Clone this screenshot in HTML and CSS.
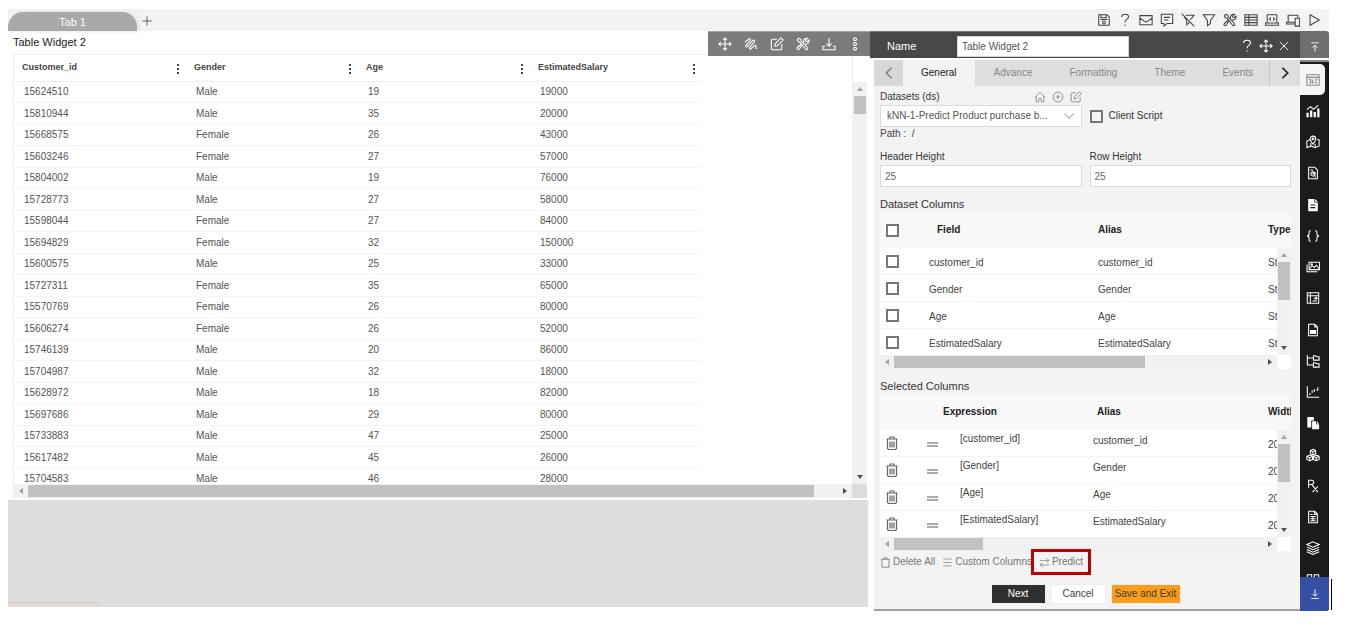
FILE: index.html
```html
<!DOCTYPE html>
<html lang="en">
<head>
<meta charset="utf-8">
<title>Table Widget 2</title>
<link rel="stylesheet" href="styles.css">
</head>
<body>
<svg class="sprite" aria-hidden="true">
  <symbol id="i-move" viewBox="0 0 16 16"><path d="M8 1v14M1 8h14M5.800 3.200 8 1l2.200 2.200M5.800 12.800 8 15l2.200-2.200M3.200 5.800 1 8l2.200 2.200M12.800 5.800 15 8l-2.200 2.200"/></symbol>
  <symbol id="i-scribble" viewBox="0 0 16 16"><path d="M1 6 5.500 2.200c1.500-1 2.500.3 1.500 1.600L2.200 9.500c-1 1.500.3 2.500 1.600 1.500L10 4c1.500-1.200 2.800 0 1.800 1.500l-5.300 6.300c-1 1.500.3 2.700 1.700 1.600l3.300-3.400c1.400-1.200 2.800-.2 2 1.300-.6 1.200.2 2 1.700 1.200"/></symbol>
  <symbol id="i-edit" viewBox="0 0 16 16"><path d="M8 2.500H3A1.500 1.500 0 0 0 1.500 4v9A1.500 1.500 0 0 0 3 14.500h9a1.500 1.500 0 0 0 1.500-1.500V8M6 7.500 12.500 1l2.500 2.500L8.500 10 5.500 10.500z"/></symbol>
  <symbol id="i-tools" viewBox="0 0 16 16"><path d="M1.500 3 3 1.500l2.500 1 .3 2L13 12a1.400 1.400 0 0 1 0 2 1.400 1.400 0 0 1-2 0L4.500 6l-2-.5zM9 6.500a3.500 3.500 0 0 1 4-5L11 3.500l.3 1.500 1.500.3 2-2a3.500 3.500 0 0 1-4.500 4.400M6.800 9.300 3.500 14a1.400 1.400 0 0 1-2-2L6 8"/></symbol>
  <symbol id="i-save-down" viewBox="0 0 16 16"><path d="M8 1v9.500M5 7.500l3 3 3-3M3.500 10.500H1v4h14v-4h-2.500"/></symbol>
  <symbol id="i-rings" viewBox="0 0 16 16"><circle cx="8" cy="2.500" r="1.700"/><circle cx="8" cy="8" r="1.700"/><circle cx="8" cy="13.500" r="1.700"/></symbol>
  <symbol id="i-kebab" viewBox="0 0 4 10"><path class="solid" d="M1 0h2v2H1zM1 4h2v2H1zM1 8h2v2H1z"/></symbol>
  <symbol id="i-plus" viewBox="0 0 16 16"><path d="M8 2v12M2 8h12"/></symbol>
  <symbol id="i-floppy" viewBox="0 0 16 16"><path d="M2 2h9.500L14 4.500V14H2zM4.500 2v3.500h6V2M4 7.500h8"/><circle cx="8" cy="10.800" r="1.600"/></symbol>
  <symbol id="i-help" viewBox="0 0 16 16"><path d="M4 4.500C4.200 2.500 5.800 1.500 8 1.500s4 1.200 4 3.200C12 7 8 7.300 8 10.500M8 13v1.700"/></symbol>
  <symbol id="i-mail" viewBox="0 0 16 16"><path d="M1 3h14v10.500H1zM1 6l7 4.500L15 6"/></symbol>
  <symbol id="i-comment" viewBox="0 0 16 16"><path d="M1.500 1.500h13V12H8l-3.500 3v-3h-3zM4.500 5h7M4.500 8h5"/></symbol>
  <symbol id="i-nofilter" viewBox="0 0 16 16"><path d="M5.500 2.500H15L10.500 8M3.500 4.500 6.500 8v5.500L9.500 11V9.500M.8.800l14.400 14.400"/></symbol>
  <symbol id="i-filter" viewBox="0 0 16 16"><path d="M1.500 2h13L9.700 8.500V12l-3.400 2.500v-6z"/></symbol>
  <symbol id="i-grid" viewBox="0 0 16 16"><path d="M1 2h14v12H1zM5.500 2v12M1 5h14M1 8h14M1 11h14"/></symbol>
  <symbol id="i-laptop" viewBox="0 0 16 16"><path d="M2.500 2h11v9.500h-11zM.5 11.500h15v2.500H.5zM6.800 5 5 6.800l1.800 1.800M9.200 5 11 6.800 9.200 8.600"/></symbol>
  <symbol id="i-devices" viewBox="0 0 16 16"><path d="M10 12.500H.5v-2H10M2.500 10.500v-8h11V5M10.500 6h5v9h-5z"/></symbol>
  <symbol id="i-play" viewBox="0 0 16 16"><path d="M3.500 2 14 8 3.500 14z"/></symbol>
  <symbol id="i-close" viewBox="0 0 16 16"><path d="M2.500 2.500l11 11M13.500 2.500l-11 11"/></symbol>
  <symbol id="i-top" viewBox="0 0 16 16"><path d="M3 2.500h10M8 14V5.500M4.500 9 8 5.500 11.500 9"/></symbol>
  <symbol id="i-left" viewBox="0 0 16 16"><path d="M11 2 5 8l6 6"/></symbol>
  <symbol id="i-right" viewBox="0 0 16 16"><path d="M5 2l6 6-6 6"/></symbol>
  <symbol id="i-down" viewBox="0 0 16 16"><path d="M2 5l6 6 6-6"/></symbol>
  <symbol id="i-home" viewBox="0 0 16 16"><path d="M1 8.500 8 2l7 6.500M3 7v7.500h3.500V10h3v4.500H13V7"/></symbol>
  <symbol id="i-add" viewBox="0 0 16 16"><circle cx="8" cy="8" r="6.500"/><path d="M8 5v6M5 8h6"/></symbol>
  <symbol id="i-trash" viewBox="0 0 12 14"><path d="M.5 3h11M1.500 3v9.500l1 1h7l1-1V3M4 3V1h4v2M4 5.500v6M6 5.500v6M8 5.500v6"/></symbol>
  <symbol id="i-bin" viewBox="0 0 12 14"><path d="M.5 3h11M1.500 3v10h9V3M4 3V1h4v2"/></symbol>
  <symbol id="i-menu" viewBox="0 0 16 16"><path d="M2 3h12M2 8h12M2 13h12"/></symbol>
  <symbol id="i-swap" viewBox="0 0 16 16"><path d="M1 5h13.500M11 1.500 14.500 5 11 8M15 11.500H1.500M5 8.500l-3.500 3L5 15"/></symbol>
  <symbol id="i-widget" viewBox="0 0 16 16"><path d="M1 2h14v12H1zM1 5h14M3.500 7.500h2v4h-2M7.500 7.500v4h2M12.500 7.500h-1.200v4h1.200"/></symbol>
  <symbol id="i-chart" viewBox="0 0 16 16"><path d="M1 6.500 5 3l3.500 3L14 1.500"/><path class="solid" d="M.5 10h2.600v5H.5zM4.600 7.500h2.600V15H4.600zM8.700 9h2.600v6H8.700zM12.800 5h2.600v10h-2.600z"/></symbol>
  <symbol id="i-map" viewBox="0 0 16 16"><path d="M4.500 5.500 1 7v7.500l4.500-2 5 2 4.500-2V5.500l-2-.5M5.500 9v3.500M10.500 10v4.500M8 10.500C6 8 4.800 6.500 4.800 4.500a3.200 3.200 0 0 1 6.400 0c0 2-1.200 3.500-3.200 6z"/><circle cx="8" cy="4.500" r="1"/></symbol>
  <symbol id="i-filegear" viewBox="0 0 16 16"><path d="M3 1.500h7L13 4.500v10H3z"/><circle cx="8" cy="9" r="2.500"/><path d="M8 6.500V9h2.500M5 4.500h3M10 12l1 1"/></symbol>
  <symbol id="i-doc" viewBox="0 0 16 16"><path class="solid" d="M2.500 1h7v4h4v10h-11zM10.300 1l3.200 3.300h-3.200z"/><path class="cut" d="M5 8h5.500M5 11h5.500"/></symbol>
  <symbol id="i-braces" viewBox="0 0 16 16"><path d="M5.500 2C3 2 3.500 3 3.500 5.500S2.500 8 1 8c1.500 0 2.500 0 2.500 2.500S3 14 5.500 14M10.500 2c2.500 0 2 1 2 3.500S13.500 8 15 8c-1.500 0-2.500 0-2.500 2.500S13 14 10.500 14"/></symbol>
  <symbol id="i-images" viewBox="0 0 16 16"><path d="M3.500 2.500h12V11h-12zM1.200 5v8.500H13M4 10l3-3.500 2.500 2L12 6l3 4"/><circle cx="6.500" cy="5" r=".8"/></symbol>
  <symbol id="i-pivot" viewBox="0 0 16 16"><path d="M1.500 2h13v12h-13zM1.500 5.500h13M5 2v12M7.500 11.500h4v-4M9 9l2.500-2L13 9"/></symbol>
  <symbol id="i-filedata" viewBox="0 0 16 16"><path d="M3 1.500h7L13 4.500v10H3zM10 1.500v3h3"/><path class="solid" d="M4.500 8h7v4.500h-7z"/></symbol>
  <symbol id="i-tree" viewBox="0 0 16 16"><path d="M1.500 1v11.500H8M1.500 4.500H8M8.500 2h2.500l1 1.200h3V7H8.500zM8.500 10H11l1 1.200h3V15H8.500z"/></symbol>
  <symbol id="i-plot" viewBox="0 0 16 16"><path d="M1.500 1.500v12.500H15M4.500 11.500V9M7 9V6M9.500 8V4.500M12 6h1.500V2.500"/></symbol>
  <symbol id="i-copy" viewBox="0 0 16 16"><path class="solid" d="M1.500 1H9v4H6v8H1.500zM7 6h4.500v3.500H15V15H7zM12.300 6 15 8.800h-2.700z"/></symbol>
  <symbol id="i-cubes" viewBox="0 0 16 16"><path d="M8 1.500 11 3v3.500L8 8 5 6.500V3zM5 3l3 1.500L11 3M8 4.500V8M4.300 8 7.500 9.500V13l-3.200 1.500L1 13V9.500zM1 9.500 4.300 11l3.200-1.500M4.300 11v3.500M11.700 8 15 9.500V13l-3.300 1.500L8.500 13V9.500zM8.500 9.500l3.200 1.500L15 9.500M11.700 11v3.500"/></symbol>
  <symbol id="i-rx" viewBox="0 0 16 16"><path d="M3 10V1.500h3.500a2.300 2.300 0 0 1 0 4.700H3M6.500 6.200 13.500 15M13.500 8.500 7.500 15"/></symbol>
  <symbol id="i-report" viewBox="0 0 16 16"><path d="M3 1.500h7L13 4.500v10H3zM9.500 1.500V5H13M5 5h2.500M5 7.500h6M5 10h6M5 12.300h6M8 7.500v5"/></symbol>
  <symbol id="i-layers" viewBox="0 0 16 16"><path d="M8 1l7 3-7 3-7-3zM1 7l7 3 7-3M1 9.800l7 3 7-3M1 12.400l7 3 7-3"/></symbol>
  <symbol id="i-blocks" viewBox="0 0 16 16"><path d="M1.500 6V2h5v4M9.500 6V2h5v4"/></symbol>
  <symbol id="i-download" viewBox="0 0 16 16"><path d="M8 1.500v9M4.500 7.500 8 11l3.500-3.500M3 14h10"/></symbol>
</svg>

<div class="app">
  <header class="topbar">
    <nav class="page-tabs">
      <button class="page-tab">Tab 1</button>
      <button class="add-tab" aria-label="Add tab"><svg><use href="#i-plus"/></svg></button>
    </nav>
    <div class="top-tools">
      <button aria-label="Save"><svg><use href="#i-floppy"/></svg></button>
      <button aria-label="Help"><svg><use href="#i-help"/></svg></button>
      <button aria-label="Mail"><svg><use href="#i-mail"/></svg></button>
      <button aria-label="Comment"><svg><use href="#i-comment"/></svg></button>
      <button aria-label="Clear filter"><svg><use href="#i-nofilter"/></svg></button>
      <button aria-label="Filter"><svg><use href="#i-filter"/></svg></button>
      <button aria-label="Tools"><svg><use href="#i-tools"/></svg></button>
      <button aria-label="Grid"><svg><use href="#i-grid"/></svg></button>
      <button aria-label="Code"><svg><use href="#i-laptop"/></svg></button>
      <button aria-label="Devices"><svg><use href="#i-devices"/></svg></button>
      <button aria-label="Run"><svg><use href="#i-play"/></svg></button>
    </div>
  </header>

  <main class="main">
    <section class="workspace">
      <div class="widget-head">
        <h1 class="widget-title">Table Widget 2</h1>
        <div class="widget-tools">
          <button aria-label="Move"><svg><use href="#i-move"/></svg></button>
          <button aria-label="Style"><svg><use href="#i-scribble"/></svg></button>
          <button aria-label="Edit"><svg><use href="#i-edit"/></svg></button>
          <button aria-label="Settings"><svg><use href="#i-tools"/></svg></button>
          <button aria-label="Export"><svg><use href="#i-save-down"/></svg></button>
          <button aria-label="More"><svg><use href="#i-rings"/></svg></button>
        </div>
      </div>
      <div class="data-box">
        <div class="data-view">
          <table class="data-table">
            <thead><tr>
              <th><span class="th-in">Customer_id<button aria-label="Customer_id menu"><svg><use href="#i-kebab"/></svg></button></span></th>
              <th><span class="th-in">Gender<button aria-label="Gender menu"><svg><use href="#i-kebab"/></svg></button></span></th>
              <th><span class="th-in">Age<button aria-label="Age menu"><svg><use href="#i-kebab"/></svg></button></span></th>
              <th><span class="th-in">EstimatedSalary<button aria-label="EstimatedSalary menu"><svg><use href="#i-kebab"/></svg></button></span></th>
            </tr></thead>
            <tbody>
              <tr><td>15624510</td><td>Male</td><td>19</td><td>19000</td></tr>
              <tr><td>15810944</td><td>Male</td><td>35</td><td>20000</td></tr>
              <tr><td>15668575</td><td>Female</td><td>26</td><td>43000</td></tr>
              <tr><td>15603246</td><td>Female</td><td>27</td><td>57000</td></tr>
              <tr><td>15804002</td><td>Male</td><td>19</td><td>76000</td></tr>
              <tr><td>15728773</td><td>Male</td><td>27</td><td>58000</td></tr>
              <tr><td>15598044</td><td>Female</td><td>27</td><td>84000</td></tr>
              <tr><td>15694829</td><td>Female</td><td>32</td><td>150000</td></tr>
              <tr><td>15600575</td><td>Male</td><td>25</td><td>33000</td></tr>
              <tr><td>15727311</td><td>Female</td><td>35</td><td>65000</td></tr>
              <tr><td>15570769</td><td>Female</td><td>26</td><td>80000</td></tr>
              <tr><td>15606274</td><td>Female</td><td>26</td><td>52000</td></tr>
              <tr><td>15746139</td><td>Male</td><td>20</td><td>86000</td></tr>
              <tr><td>15704987</td><td>Male</td><td>32</td><td>18000</td></tr>
              <tr><td>15628972</td><td>Male</td><td>18</td><td>82000</td></tr>
              <tr><td>15697686</td><td>Male</td><td>29</td><td>80000</td></tr>
              <tr><td>15733883</td><td>Male</td><td>47</td><td>25000</td></tr>
              <tr><td>15617482</td><td>Male</td><td>45</td><td>26000</td></tr>
              <tr><td>15704583</td><td>Male</td><td>46</td><td>28000</td></tr>
            </tbody>
          </table>
        </div>
        <div class="vbar-col"><div class="vbar"><i class="arrow up off"></i><span class="thumb short"></span><i class="arrow down"></i></div></div>
        <div class="hbar"><i class="arrow left off"></i><span class="track"><span class="thumb wide"></span></span><i class="arrow right"></i></div>
        <div class="corner"></div>
      </div>
      <div class="canvas"><span class="status-chip"></span></div>
    </section>

    <aside class="inspector">
      <div class="insp-head">
        <label for="w-name">Name</label>
        <input id="w-name" type="text" value="Table Widget 2">
        <div class="head-tools">
          <button aria-label="Help"><svg><use href="#i-help"/></svg></button>
          <button aria-label="Move"><svg><use href="#i-move"/></svg></button>
          <button aria-label="Close"><svg><use href="#i-close"/></svg></button>
        </div>
      </div>
      <button class="rail-top" aria-label="Collapse"><svg><use href="#i-top"/></svg></button>

      <div class="panel">
        <div class="tabs">
          <button class="tab-arrow prev" aria-label="Previous tabs"><svg><use href="#i-left"/></svg></button>
          <div class="tab-list">
            <button class="tab active">General</button>
            <button class="tab">Advance</button>
            <button class="tab">Formatting</button>
            <button class="tab">Theme</button>
            <button class="tab">Events</button>
          </div>
          <button class="tab-arrow next" aria-label="Next tabs"><svg><use href="#i-right"/></svg></button>
        </div>
        <form class="form">
          <div class="pair">
            <div>
              <div class="label-row">
                <label for="ds">Datasets (ds)</label>
                <span class="ds-tools">
                  <button type="button" aria-label="Home"><svg><use href="#i-home"/></svg></button>
                  <button type="button" aria-label="Add"><svg><use href="#i-add"/></svg></button>
                  <button type="button" aria-label="Edit"><svg><use href="#i-edit"/></svg></button>
                </span>
              </div>
              <div class="select-wrap">
                <select id="ds"><option>kNN-1-Predict Product purchase b...</option></select>
                <svg><use href="#i-down"/></svg>
              </div>
            </div>
            <label class="check-label"><input class="check" type="checkbox">Client Script</label>
          </div>
          <p class="path">Path :&nbsp; /</p>
          <div class="pair sizes">
            <div><label class="field-label" for="hh">Header Height</label><input class="text" id="hh" type="text" value="25"></div>
            <div><label class="field-label" for="rh">Row Height</label><input class="text" id="rh" type="text" value="25"></div>
          </div>

          <h2 class="section-title">Dataset Columns</h2>
          <div class="list">
            <div class="list-view">
              <table class="cols dataset">
                <colgroup><col class="c-check"><col class="c-field"><col class="c-alias"><col class="c-last"></colgroup>
                <thead><tr><th><input class="check" type="checkbox" aria-label="Select all"></th><th class="inset">Field</th><th>Alias</th><th>Type</th></tr></thead>
                <tbody>
                  <tr><td><input class="check" type="checkbox" aria-label="customer_id"></td><td>customer_id</td><td>customer_id</td><td>String</td></tr>
                  <tr><td><input class="check" type="checkbox" aria-label="Gender"></td><td>Gender</td><td>Gender</td><td>String</td></tr>
                  <tr><td><input class="check" type="checkbox" aria-label="Age"></td><td>Age</td><td>Age</td><td>String</td></tr>
                  <tr><td><input class="check" type="checkbox" aria-label="EstimatedSalary"></td><td>EstimatedSalary</td><td>EstimatedSalary</td><td>String</td></tr>
                </tbody>
              </table>
              <div class="vbar over"><i class="arrow up off"></i><span class="thumb mid"></span><i class="arrow down"></i></div>
            </div>
            <div class="hbar"><i class="arrow left off"></i><span class="track"><span class="thumb seventy"></span></span><i class="arrow right"></i></div>
          </div>

          <h2 class="section-title">Selected Columns</h2>
          <div class="list">
            <div class="list-view">
              <table class="cols selected">
                <colgroup><col class="c-act"><col class="c-act"><col class="c-expr"><col class="c-sel"><col class="c-last"></colgroup>
                <thead><tr><th></th><th colspan="2" class="expr-head">Expression</th><th class="alias-head">Alias</th><th>Width</th></tr></thead>
                <tbody>
                  <tr><td><button type="button" class="icon-btn" aria-label="Delete"><svg><use href="#i-trash"/></svg></button></td><td><span class="grip"></span></td><td class="lift">[customer_id]</td><td class="lift alias">customer_id</td><td>200</td></tr>
                  <tr><td><button type="button" class="icon-btn" aria-label="Delete"><svg><use href="#i-trash"/></svg></button></td><td><span class="grip"></span></td><td class="lift">[Gender]</td><td class="lift alias">Gender</td><td>200</td></tr>
                  <tr><td><button type="button" class="icon-btn" aria-label="Delete"><svg><use href="#i-trash"/></svg></button></td><td><span class="grip"></span></td><td class="lift">[Age]</td><td class="lift alias">Age</td><td>200</td></tr>
                  <tr><td><button type="button" class="icon-btn" aria-label="Delete"><svg><use href="#i-trash"/></svg></button></td><td><span class="grip"></span></td><td class="lift">[EstimatedSalary]</td><td class="lift alias">EstimatedSalary</td><td>200</td></tr>
                </tbody>
              </table>
              <div class="vbar over"><i class="arrow up off"></i><span class="thumb mid"></span><i class="arrow down"></i></div>
            </div>
            <div class="hbar"><i class="arrow left off"></i><span class="track"><span class="thumb quarter"></span></span><i class="arrow right"></i></div>
          </div>

          <div class="actions">
            <button type="button"><svg><use href="#i-bin"/></svg>Delete All</button>
            <button type="button"><svg><use href="#i-menu"/></svg>Custom Columns</button>
            <button type="button" class="marked"><svg><use href="#i-swap"/></svg>Predict</button>
          </div>
          <div class="footer">
            <button type="button" class="btn dark">Next</button>
            <button type="button" class="btn plain">Cancel</button>
            <button type="button" class="btn amber">Save and Exit</button>
          </div>
        </form>
      </div>

      <nav class="rail">
        <div class="rail-list">
          <button class="current" aria-label="Widget"><svg><use href="#i-widget"/></svg></button>
          <button aria-label="Charts"><svg><use href="#i-chart"/></svg></button>
          <button aria-label="Map"><svg><use href="#i-map"/></svg></button>
          <button aria-label="File settings"><svg><use href="#i-filegear"/></svg></button>
          <button aria-label="Document"><svg><use href="#i-doc"/></svg></button>
          <button aria-label="Code"><svg><use href="#i-braces"/></svg></button>
          <button aria-label="Images"><svg><use href="#i-images"/></svg></button>
          <button aria-label="Pivot"><svg><use href="#i-pivot"/></svg></button>
          <button aria-label="Data file"><svg><use href="#i-filedata"/></svg></button>
          <button aria-label="Tree"><svg><use href="#i-tree"/></svg></button>
          <button aria-label="Plot"><svg><use href="#i-plot"/></svg></button>
          <button aria-label="Copy"><svg><use href="#i-copy"/></svg></button>
          <button aria-label="Cubes"><svg><use href="#i-cubes"/></svg></button>
          <button aria-label="Rx"><svg><use href="#i-rx"/></svg></button>
          <button aria-label="Report"><svg><use href="#i-report"/></svg></button>
          <button aria-label="Layers"><svg><use href="#i-layers"/></svg></button>
          <button aria-label="Blocks"><svg><use href="#i-blocks"/></svg></button>
        </div>
        <button class="rail-bottom" aria-label="Scroll down"><svg><use href="#i-download"/></svg></button>
        <span class="caret"></span>
      </nav>
    </aside>
  </main>
</div>
</body>
</html>
```
FILE: styles.css
```css
* { box-sizing: border-box; }

body {
  margin: 0;
  background: #fff;
  color: #444;
  font: 10px/14px "Liberation Sans", Arial, sans-serif;
}

.sprite { position: absolute; width: 0; height: 0; }

svg {
  display: block;
  width: 14px;
  height: 14px;
  fill: none;
  stroke: currentColor;
  stroke-width: 1.2;
}

.solid { fill: currentColor; stroke: none; }
.cut { stroke: #1b1b1b; }

button {
  display: block;
  margin: 0;
  padding: 0;
  border: 0;
  background: none;
  color: inherit;
  font: inherit;
}

input, select { margin: 0; font: inherit; }
h1, h2, p { margin: 0; font-weight: normal; }

.app { padding: 9px 21px 0 8px; }

/* Top bar */
.topbar {
  display: flex;
  justify-content: space-between;
  height: 22px;
  background: #f3f3f3;
}

.page-tabs { display: flex; align-items: flex-end; gap: 4px; }

.page-tab {
  width: 129px;
  height: 19px;
  border-radius: 15px 15px 0 0;
  background: #a9a9a9;
  box-shadow: 2px 0 4px #ddd;
  color: #fff;
  font-size: 11px;
}

.add-tab { padding: 4px 0; color: #555; }
.add-tab svg { width: 12px; height: 12px; }

.top-tools {
  display: flex;
  align-items: center;
  gap: 7px;
  padding-right: 8px;
  color: #444;
}

.main { display: flex; }

/* Workspace */
.workspace {
  display: flex;
  flex: 1;
  flex-direction: column;
  min-width: 0;
  padding-bottom: 4px;
}

.widget-head {
  display: flex;
  justify-content: space-between;
  height: 23px;
}

.widget-title {
  padding-left: 5px;
  color: #222;
  font-size: 11px;
  line-height: 23px;
}

.widget-tools {
  position: relative;
  display: flex;
  align-items: center;
  gap: 12px;
  height: 25px;
  padding: 0 8px 0 10px;
  background: #7b7b7b;
  border-top: 1px solid #a5a5a5;
  color: #fff;
}

.data-box {
  display: grid;
  grid-template-columns: minmax(0, 1fr) 15px;
  grid-template-rows: auto 14px;
  margin: 0 3px 0 5px;
  border-top: 1px solid #eee;
  border-left: 1px solid #eee;
}

.data-view { height: 429px; overflow: hidden; }

.data-table {
  width: 688px;
  border-collapse: separate;
  border-spacing: 0;
  table-layout: fixed;
}

.data-table th {
  height: 27px;
  padding: 0 6px 2px 8px;
  border-bottom: 1px solid #f0f0f0;
  color: #444;
  font-size: 9px;
  text-align: left;
}

.th-in { display: flex; align-items: center; justify-content: space-between; }
.th-in svg { width: 4px; height: 10px; margin-top: 3px; }

.data-table td {
  height: 21px;
  padding: 0 0 0 10px;
  border-bottom: 1px solid #f5f5f5;
  color: #555;
}

.data-table tr:nth-child(even) td { height: 22px; }

.vbar-col {
  display: flex;
  padding-top: 27px;
  border-left: 1px solid #eee;
}

.corner { background: #dcdcdc; }

.canvas {
  position: relative;
  flex: 1;
  margin: 2px 2px 0 0;
  overflow: hidden;
  background: #ddd;
}

.status-chip {
  position: absolute;
  bottom: 0;
  left: 0;
  width: 90px;
  height: 5px;
  border-top: 1px solid #d0cac8;
  border-radius: 0 3px 0 0;
  background: #e3dad5;
}

/* Scroll bars */
.vbar {
  display: flex;
  flex: 1;
  flex-direction: column;
  align-items: center;
  width: 14px;
  background: #f1f1f1;
}

.vbar.over { position: absolute; top: 36px; right: 0; bottom: 0; }

.hbar {
  display: flex;
  align-items: center;
  height: 14px;
  background: #f1f1f1;
}

.track { flex: 1; height: 12px; }
.thumb { display: block; background: #c1c1c1; }
.short { width: 12px; height: 18px; }
.mid { width: 12px; height: 38px; }
.vbar .down { margin-top: auto; }
.wide { width: 97%; height: 12px; }
.seventy { width: 71%; height: 12px; }
.quarter { width: 25%; height: 12px; }

.arrow {
  width: 14px;
  height: 14px;
  background: #505050;
  clip-path: polygon(4px 5px, 10px 5px, 7px 9px);
}

.arrow.up { clip-path: polygon(4px 9px, 10px 9px, 7px 5px); }
.arrow.left { clip-path: polygon(9px 4px, 9px 10px, 5px 7px); }
.arrow.right { clip-path: polygon(5px 4px, 5px 10px, 9px 7px); }
.arrow.off { background: #a3a3a3; }

/* Inspector */
.inspector {
  display: grid;
  grid-template-columns: minmax(0, 1fr) 29px;
  grid-template-rows: 27px auto;
  row-gap: 2px;
  flex: 0 0 459px;
  min-width: 0;
}

.insp-head {
  display: flex;
  align-items: center;
  padding: 2px 10px 0 17px;
  border-top: 1px solid #777;
  background: #484848;
  color: #fff;
}

.insp-head label { width: 70px; font-size: 11px; }

.insp-head input {
  width: 172px;
  height: 21px;
  padding: 0 4px;
  border: 1px solid #cfd4de;
  background: #fff;
  color: #555;
}

.head-tools { display: flex; align-items: center; gap: 5px; margin-left: auto; }
.head-tools button:last-child svg { width: 12px; height: 12px; }

.rail-top {
  display: grid;
  place-items: center;
  padding-top: 4px;
  border-radius: 0 3px 0 0;
  background: #6e6e6e;
  color: #fff;
}

.rail-top svg { width: 12px; height: 12px; }

.panel {
  margin-left: 4px;
  border-bottom: 2px solid #a0a0a0;
  background: #f3f3f3;
}

.tabs { display: flex; height: 26px; background: #dedede; color: #888; }
.tab-list { display: flex; flex: 1; gap: 1px; overflow: hidden; }
.tab { padding: 0 18px; }
.tab.active { background: #f3f3f3; color: #222; }
.tab-arrow { display: grid; place-items: center; flex: 0 0 29px; }
.tab-arrow svg { stroke-width: 2; }
.prev { background: #d8d8d8; }
.next { flex-basis: 31px; border-left: 1px solid #c4c4c4; color: #222; }

.form { padding: 3px 9px 5px 6px; }

.pair {
  display: grid;
  grid-template-columns: 1fr 1fr;
  column-gap: 8px;
}

.label-row, .field-label {
  display: flex;
  align-items: center;
  justify-content: space-between;
  height: 16px;
  color: #333;
}

.ds-tools { display: flex; gap: 6px; color: #888; }
.ds-tools svg { width: 12px; height: 12px; }

.select-wrap { position: relative; }

select, .text {
  display: block;
  width: 100%;
  height: 22px;
  padding: 0 6px;
  border: 1px solid #d5dae5;
  border-radius: 0;
  background: #fff;
  color: #555;
  appearance: none;
}

.text { padding: 0 4px; color: #666; }

.select-wrap svg {
  position: absolute;
  top: 5px;
  right: 7px;
  width: 12px;
  height: 12px;
  color: #777;
}

.check-label {
  display: flex;
  align-items: center;
  gap: 6px;
  height: 22px;
  align-self: end;
  color: #333;
}

.check {
  display: block;
  width: 13px;
  height: 13px;
  border: 2px solid #777;
  background: #fff;
  appearance: none;
}

.check-label .check { background: transparent; }

.path { color: #444; }
.sizes { margin-top: 8px; }

.section-title {
  margin-top: 10px;
  color: #333;
  font-size: 11px;
  line-height: 15px;
}

.list { background: #fff; }

.list-view {
  position: relative;
  height: 143px;
  overflow: hidden;
}

.cols {
  width: 440px;
  border-collapse: separate;
  border-spacing: 0;
  table-layout: fixed;
}

.cols th {
  height: 36px;
  padding: 0;
  background: #f8f8f8;
  color: #222;
  text-align: left;
}

.cols td {
  height: 27px;
  padding: 3px 0 0;
  border-bottom: 1px solid #f3f3f3;
}

.cols .check { margin-left: 6px; }
.dataset td:first-child { padding-top: 0; }
.cols .inset { padding-left: 8px; }
.cols .expr-head { padding-left: 23px; }
.cols .alias-head { padding-left: 4px; }
.cols .lift { padding: 2px 0 0; vertical-align: top; }
.cols .alias { padding-top: 4px; }
.selected td:first-child { padding-top: 0; }

.c-check { width: 49px; }
.c-field { width: 169px; }
.c-alias { width: 170px; }
.c-act { width: 40px; }
.c-expr { width: 133px; }
.c-sel { width: 175px; }
.c-last { width: auto; }

.icon-btn { margin-left: 6px; color: #666; }
.icon-btn svg { width: 12px; height: 14px; }

.grip {
  display: block;
  width: 11px;
  height: 5px;
  margin-left: 7px;
  border-top: 2px solid #aaa;
  border-bottom: 2px solid #aaa;
}

.list .hbar { margin-right: 14px; }
.list .seventy { width: 68%; }
.list .quarter { width: 24%; }

.actions {
  display: flex;
  align-items: center;
  gap: 7px;
  height: 22px;
  color: #777;
}

.actions button { display: flex; align-items: center; gap: 2px; }
.actions svg { width: 11px; height: 11px; stroke-width: 1; }

.marked { position: relative; }

.marked::after {
  content: "";
  position: absolute;
  inset: -6px -8px;
  border: 3px solid #c00000;
}

.footer {
  display: flex;
  justify-content: center;
  gap: 5px;
  margin-top: 11px;
}

.btn { width: 55px; height: 20px; border: 1px solid #eee; }
.dark { background: #2f2f2f; color: #fff; }
.plain { background: #fff; }
.amber { width: 70px; background: #f99d1c; color: #4a3a20; }

/* Icon rail */
.rail {
  position: relative;
  display: flex;
  flex-direction: column;
  padding-top: 2px;
  border-top: 2px solid #888;
  border-radius: 0 0 3px 0;
  background: #1b1b1b;
  color: #fff;
}

.rail-list {
  flex: 1;
  overflow: hidden;
  contain: size;
}

.rail-list button {
  display: grid;
  place-items: center;
  width: 25px;
  height: 31px;
}

.rail-list button:nth-child(4n) { height: 32px; }
.rail-list .current { border-radius: 0 5px 5px 0; background: #f5f5f5; color: #888; }

.rail-bottom {
  display: grid;
  place-items: center;
  height: 34px;
  border-radius: 0 0 3px 0;
  background: #344fa3;
}

.rail-bottom svg { width: 12px; height: 12px; }

.caret {
  position: absolute;
  right: -3px;
  bottom: 1px;
  width: 1px;
  height: 31px;
  background: #000;
}
```
